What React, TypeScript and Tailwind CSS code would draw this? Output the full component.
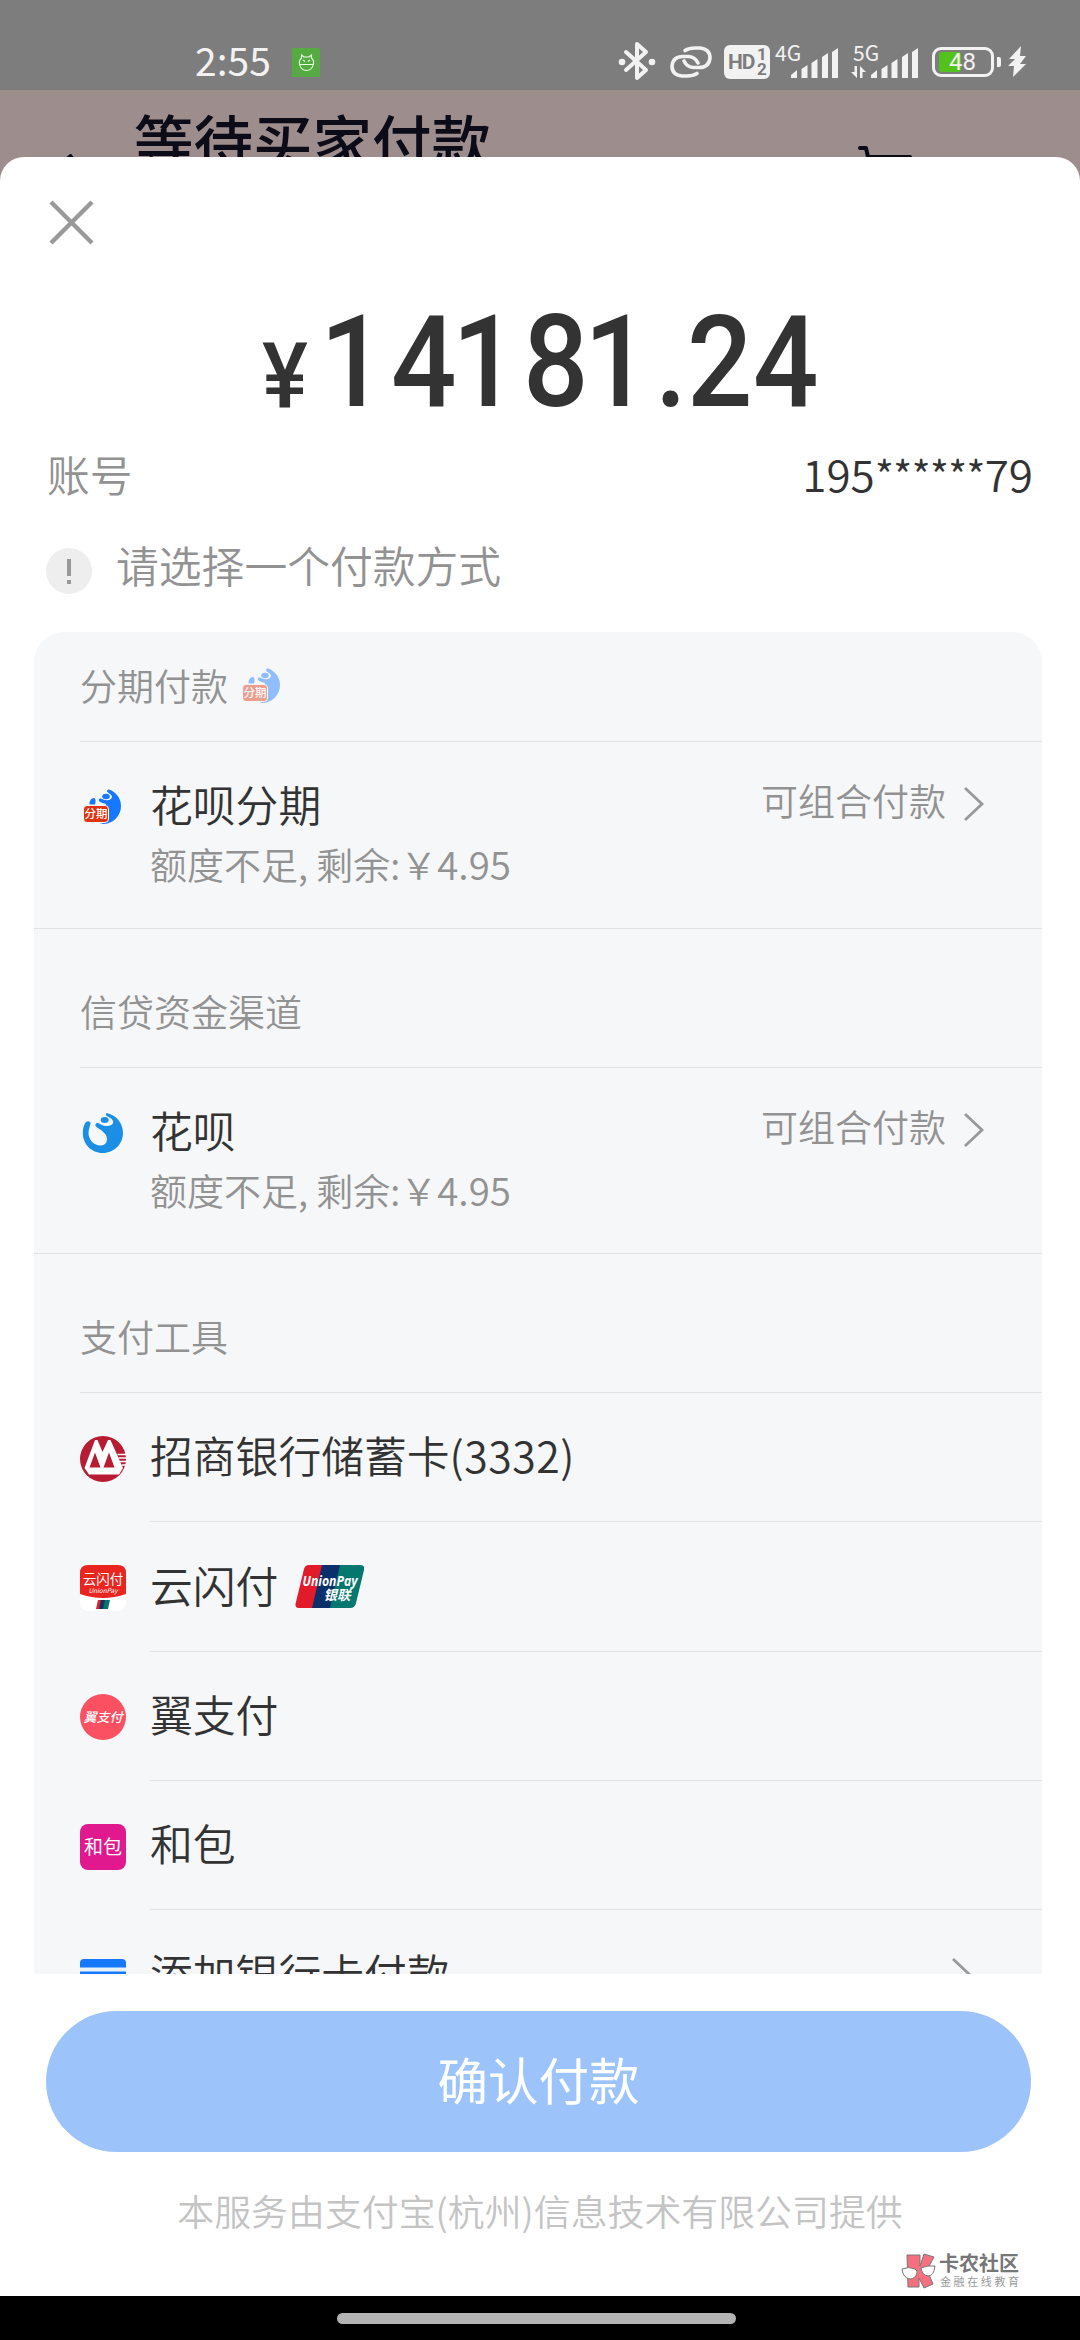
import type { ReactNode } from "react";

interface PayMethod {
  name: string;
  tail?: string;
  icon: ReactNode;
  badge?: ReactNode;
}

const METHODS: PayMethod[] = [
  { name: "招商银行储蓄卡", tail: "(3332)", icon: <CmbIcon /> },
  { name: "云闪付", icon: <QuickPassIcon />, badge: <UnionPayBadge /> },
  { name: "翼支付", icon: <BestPayIcon /> },
  { name: "和包", icon: <HebaoIcon /> },
];

const AMOUNT = "14181.24";

export default function App() {
  return (
    <div className="flex h-[2340px] w-[1080px] flex-col overflow-hidden bg-[#9d8d8d] font-['Noto_Sans_CJK_SC',sans-serif] text-[#333]">
      <StatusBar />

      {/* 被遮住的订单页标题 */}
      <div className="flex h-[67px] shrink-0 items-start overflow-hidden border-t-4 border-[#9a8f8d] text-[#0c0b18]">
        <svg className="mt-[60px] ml-[63px] h-[6px] w-[14px]" viewBox="0 0 14 6">
          <path d="M3 6 L9 1" stroke="currentColor" strokeWidth="4" />
        </svg>
        <h1 className="mt-[13px] ml-[57px] w-[719px] text-[59.5px] leading-[64px] font-medium">
          等待买家付款
        </h1>
        <svg className="mt-[50px] ml-[5px] h-[14px] w-[54px]" viewBox="0 0 54 14">
          <path d="M2 4 H8 L10 13 H52" fill="none" stroke="currentColor" strokeWidth="4" strokeLinecap="round" strokeLinejoin="round" />
        </svg>
      </div>

      <main className="flex h-[2139px] shrink-0 flex-col rounded-t-[24px] bg-white">
        <div className="flex h-[131px] shrink-0 items-center pl-[49px]">
          <svg className="size-[45px]" viewBox="0 0 45 45">
            <path d="M2 2 L43 43 M43 2 L2 43" stroke="#999" strokeWidth="4.5" />
          </svg>
        </div>

        <Amount />

        <div className="flex h-[74px] shrink-0 items-center justify-between pr-[47px] pb-[4px] pl-[47px] text-[42.8px] leading-none">
          <span className="font-[350] text-[#929292]">账号</span>
          <span className="text-[44px] font-[350]">
            195<span className="text-[42px] tracking-[-1px]">******</span>79
          </span>
        </div>

        <div className="flex h-[120px] shrink-0 items-center pb-[6px] pl-[46px]">
          <span className="mt-[4px] flex size-[46px] flex-col items-center justify-center gap-[4px] rounded-full bg-[#eee]">
            <i className="h-[17px] w-[4px] bg-[#999]" />
            <i className="size-[4px] bg-[#999]" />
          </span>
          <span className="mb-[10px] ml-[24px] text-[42.8px] leading-none font-[350] text-[#929292]">
            请选择一个付款方式
          </span>
        </div>

        <section className="mx-[34px] mr-[38px] flex h-[1342px] shrink-0 flex-col overflow-hidden rounded-t-[30px] bg-[#f6f7f9]">
          <GroupTitle className="h-[110px] pb-[2px]">
            分期付款
            <InstallmentIcon className="ml-[13px] size-[42px] opacity-45" />
          </GroupTitle>
          <CreditRow name="花呗分期" icon={<InstallmentIcon className="size-[42px]" />} />

          <GroupTitle className="h-[139px] pt-[27px]">信贷资金渠道</GroupTitle>
          <CreditRow name="花呗" icon={<HuabeiIcon />} />

          <GroupTitle className="h-[139px] pt-[27px]">支付工具</GroupTitle>
          {METHODS.map((method) => (
            <MethodRow key={method.name} {...method} />
          ))}
          <div className="flex h-[129px] shrink-0 items-center pr-[69px] pl-[46px]">
            <CardIcon />
            <span className="mb-[4px] ml-[24px] flex-1 text-[42.8px] leading-none font-[350]">
              添加银行卡付款
            </span>
            <Chevron />
          </div>
        </section>

        <button className="mt-[37px] mr-[49px] ml-[46px] h-[141px] shrink-0 rounded-full bg-[#9dc4fa] pb-[6px] text-[50.5px] leading-none text-white">
          确认付款
        </button>

        <p className="mt-[40px] text-center text-[36.9px] leading-none font-[350] text-[#c4c4c4]">
          本服务由支付宝(杭州)信息技术有限公司提供
        </p>

        <Watermark />
      </main>

      <nav className="flex h-[44px] shrink-0 bg-black pt-[17px] pl-[337px]">
        <div className="h-[11px] w-[399px] rounded-full bg-[#b3b3b3]" />
      </nav>
    </div>
  );
}

function StatusBar() {
  return (
    <header className="flex h-[90px] shrink-0 items-start bg-[#7d7d7d] text-[#f2f2f2]">
      <span className="mt-[39px] ml-[195px] w-[97px] text-[39px] leading-[40px]">2:55</span>
      <svg className="mt-[48px] h-[29px] w-[28px]" viewBox="0 0 28 29">
        <rect width="28" height="29" rx="1" fill="#55ab41" />
        <g fill="none" stroke="#e9ffe0" strokeWidth="1.1">
          <path d="M9.5 10 V7 L12 9 H17 L19.5 7 V10 Q22 12 21.5 16 Q20 22.5 14.5 22.5 Q9 22.5 7.5 16 Q7 12 9.5 10 Z M7.5 16.5 H21.5" />
          <path d="M11 12 L13 13.5 M18 12 L16 13.5" />
        </g>
      </svg>

      <svg className="mt-[40px] ml-[298px] h-[42px] w-[38px]" viewBox="0 0 38 42">
        <path d="M8 12 L28 30 L19 38 V4 L28 12 L8 30" fill="none" stroke="currentColor" strokeWidth="4" strokeLinejoin="round" strokeLinecap="round" />
        <circle cx="4" cy="22" r="3.3" fill="currentColor" />
        <circle cx="34" cy="22" r="3.3" fill="currentColor" />
      </svg>
      <svg className="mt-[45px] ml-[13px] h-[34px] w-[44px]" viewBox="0 0 44 34" fill="none" stroke="currentColor" strokeWidth="3.6" strokeLinecap="round">
        <path d="M16 5.5 Q20 3 26 3 H31 Q41 4 41 13 Q40 22.5 30 22.5 H24 Q18 22 15 16" />
        <path d="M28 28.5 Q24 31 18 31 H13 Q3 30 3 21 Q4 11.5 14 11.5 H20 Q26 12 29 18" />
      </svg>

      {/* HD 1/2 */}
      <div className="mt-[45px] ml-[11px] flex h-[34px] w-[46px] items-center rounded-[6px] bg-[#f2f2f2] pl-[4px] font-['Roboto',sans-serif] font-bold text-[#7d7d7d]">
        <span className="w-[29px] text-[21px] leading-none tracking-tighter">HD</span>
        <span className="flex w-[11px] flex-col text-[17px] leading-[15px]">
          <span>1</span>
          <span>2</span>
        </span>
      </div>

      <div className="mt-[41px] ml-[5px] flex w-[66px]">
        <span className="w-[16px] text-[21px] leading-[22px]">4G</span>
        <SignalBars />
      </div>
      <div className="mt-[41px] ml-[12px] flex w-[68px]">
        <div className="flex w-[18px] flex-col">
          <span className="text-[21px] leading-[22px]">5G</span>
          <svg className="mt-[3px] -ml-[2px] h-[12px] w-[16px]" viewBox="0 0 16 12">
            <path d="M0 6 L6 12 V0 H3.5 V6 Z M9 12 V0 L15 6 H11.5 V12 Z" fill="currentColor" />
          </svg>
        </div>
        <SignalBars />
      </div>

      <div className="mt-[47px] ml-[11px] flex h-[30px] w-[62px] items-center rounded-[9px] border-[3px] border-[#f2f2f2] p-[4px]">
        <div className="flex h-[20px] w-[22px] items-center rounded-[3px] bg-[#53c31b] pl-[10px]">
          <span className="font-['Roboto',sans-serif] text-[24px] leading-none">48</span>
        </div>
      </div>
      <i className="mt-[57px] ml-[3px] h-[10px] w-[4px] rounded-r-[2px] bg-[#f2f2f2]" />
      <svg className="mt-[46px] ml-[7px] h-[32px] w-[19px]" viewBox="0 0 19 32">
        <path d="M13 0 L1 13 H7 L0 20 H6 L5 31 L18 18 H12 L18 10 H12 Z" fill="currentColor" />
      </svg>
    </header>
  );
}

function SignalBars() {
  return (
    <svg className="mt-[7px] h-[30px] w-[48px]" viewBox="0 0 48 30" fill="currentColor">
      <path d="M0 27 L6 22 V30 H0 Z M10.5 21 L16.5 17 V30 H10.5 Z M20.5 15 L26.5 11 V30 H20.5 Z M31 9 L37 5 V30 H31 Z M41 4 L47 0 V30 H41 Z" />
    </svg>
  );
}

// 金额：每位数字等宽，小数点占半格
function Amount() {
  return (
    <div className="flex h-[150px] shrink-0 items-end pb-[12px] pl-[262px] font-['Roboto',sans-serif] leading-none font-medium">
      <span className="mb-[4px] w-[63px] text-[91px] leading-[91px]">
        <span className="inline-block origin-left scale-x-95">¥</span>
      </span>
      {AMOUNT.split("").map((char, i) => (
        <span
          key={i}
          className={
            char === "."
              ? "w-[32px] text-[128px] leading-[128px]"
              : char === "1"
                ? "-ml-[5px] w-[71px] text-[128px] leading-[128px]"
                : "w-[66px] text-[128px] leading-[128px]"
          }
        >
          <span className="inline-block origin-left scale-x-90">{char}</span>
        </span>
      ))}
    </div>
  );
}

function GroupTitle({ className, children }: { className: string; children: ReactNode }) {
  return (
    <div className={`ml-[46px] flex shrink-0 items-center border-b border-[#e1e3e6] text-[37px] leading-none font-[350] text-[#929292] ${className}`}>
      {children}
    </div>
  );
}

// 花呗类渠道：名称 + 剩余额度 + 组合付款入口
function CreditRow({ name, icon }: { name: string; icon: ReactNode }) {
  return (
    <div className="flex h-[186.5px] shrink-0 items-start border-b border-[#dfe3e6] pt-[40px] pr-[57px] pl-[48px]">
      <div className="mt-[4px] mr-[26px]">{icon}</div>
      <div className="flex-1 font-[350]">
        <p className="text-[42.8px] leading-[43px]">{name}</p>
        <p className="mt-[20px] text-[37px] leading-[37px] text-[#929292]">
          额度不足, 剩余:￥<span className="text-[38.5px]">4.95</span>
        </p>
      </div>
      <span className="mr-[17px] text-[37px] leading-[37px] font-[350] text-[#929292]">
        可组合付款
      </span>
      <div className="mt-[4px]">
        <Chevron />
      </div>
    </div>
  );
}

function MethodRow({ name, tail, icon, badge }: PayMethod) {
  return (
    <div className="flex h-[129.3px] shrink-0 pl-[46px]">
      <div className="flex w-[70px] items-center pt-[2px]">{icon}</div>
      <div className="flex flex-1 items-center border-b border-[#e1e3e6]">
        <span className="mb-[5px] text-[42.8px] leading-none font-[350]">
          {name}
          {tail && <span className="tracking-[0.5px]">{tail}</span>}
        </span>
        {badge}
      </div>
    </div>
  );
}

function Chevron() {
  return (
    <svg className="h-[36px] w-[22px]" viewBox="0 0 22 36">
      <path d="M2 2 L19 18 L2 34" fill="none" stroke="#999" strokeWidth="2.8" />
    </svg>
  );
}

function HuabeiIcon() {
  return (
    <svg className="size-[42px]" viewBox="0 0 42 42" fill="#1b8ee6">
      <path d="M25.4 1.3 C34 3 41 11 41 21 C41 32 32 41 20.7 41 C9.5 41 0.8 32 0.8 21 C0.8 16 2 12 4.2 10 C6 8.5 9 9.5 8.5 12 C7.5 15 6.5 18 6.5 21.5 C6.8 28 12 33.5 18.5 33.5 C24 33.5 26 29 24.5 24.5 C23.5 20.5 18 17.5 14.5 15 C12.5 13.5 13.5 10.5 16 11 C19 12 21 14 24 14 C29 14 32 12 31 9 C30 6 25.5 5 24.3 3.5 C23.5 2 24 1.2 25.4 1.3 Z" />
      <ellipse cx="22.7" cy="8" rx="4" ry="3" />
    </svg>
  );
}

function InstallmentIcon({ className }: { className: string }) {
  return (
    <svg className={className} viewBox="0 0 42 42">
      <g fill="#1677ff">
        <path d="M27 3.5 C34 6 39 12 39 20 C39 30 31 38 21 38 L18 37 L24 18 C22 17 19 17 17 15 C16 13 18 12 20 13 C24 15 29 15 30 11 C30 8 25 7 25 5 C25 4 26 3.5 27 3.5 Z" />
        <ellipse cx="24" cy="10.5" rx="3.8" ry="2.8" />
        <path d="M7.5 18.5 Q7.5 12 12 12 Q14.5 13 13 18.5 Z" />
      </g>
      <rect x="1.5" y="19.5" width="25" height="17" rx="3.5" fill="#e0340f" stroke="#f6f7f9" strokeWidth="1" />
      <text x="14" y="32" textAnchor="middle" fontSize="11.5" fontWeight="500" fill="#fff">
        分期
      </text>
    </svg>
  );
}

function CmbIcon() {
  return (
    <svg className="size-[46px]" viewBox="0 0 46 46">
      <circle cx="23" cy="23" r="23" fill="#b71c33" />
      <path d="M15 4 H17.5 L22.5 16 L28 4 H30.5 L43 32 L39 38.5 H9 L4.5 32 Z" fill="#fff" />
      <path d="M15 16.5 L20.5 31.5 H9.5 Z M29 16.5 L34.5 31.5 H23.5 Z" fill="#b71c33" />
      <path d="M37.500 18.5 H46 M38.500 22 H46 M40 25.5 H46 M42 29 H46" stroke="#fff" strokeWidth="1.6" />
    </svg>
  );
}

function QuickPassIcon() {
  return (
    <svg className="size-[46px]" viewBox="0 0 46 46">
      <rect width="46" height="46" rx="8" fill="#fff" />
      <path d="M0 29 V8 Q0 0 8 0 H38 Q46 0 46 8 V29 Q23 37 0 29 Z" fill="#ea2520" />
      <path d="M18 35 H22 L20 44 H16 Z" fill="#d8232e" />
      <path d="M21 35 H26 L24 44 H19 Z" fill="#16305f" />
      <path d="M25 35 H30 L28 44 H23 Z" fill="#08726b" />
      <text x="23" y="19" textAnchor="middle" fontSize="13.5" fill="#fff">
        云闪付
      </text>
      <text x="23" y="27.5" textAnchor="middle" fontSize="6.5" fontStyle="italic" fill="#fff">
        UnionPay
      </text>
    </svg>
  );
}

function UnionPayBadge() {
  return (
    <svg className="ml-[17px] h-[43px] w-[69px]" viewBox="0 0 69 43">
      <path d="M14 0 H30 L20 43 H4 Q0 43 0.5 39 L9 4 Q10 0 14 0 Z" fill="#e21b2b" />
      <path d="M27 0 H46 L36 43 H17 Z" fill="#0a2f6b" />
      <path d="M45 0 H65 Q70 0 69 5 L61 38 Q60 43 55 43 H35 Z" fill="#04776f" />
      <text x="35" y="21" textAnchor="middle" fontSize="14" fontWeight="700" fontStyle="italic" fill="#fff" textLength="55" lengthAdjust="spacingAndGlyphs" fontFamily="Open Sans">
        UnionPay
      </text>
      <text x="42" y="34.5" textAnchor="middle" fontSize="13.5" fontWeight="700" fontStyle="italic" fill="#fff">
        银联
      </text>
    </svg>
  );
}

function BestPayIcon() {
  return (
    <svg className="size-[46px]" viewBox="0 0 46 46">
      <circle cx="23" cy="23" r="23" fill="#fb5062" />
      <text x="23" y="27.5" textAnchor="middle" fontSize="13" fontWeight="500" fontStyle="italic" fill="#fff">
        翼支付
      </text>
    </svg>
  );
}

function HebaoIcon() {
  return (
    <svg className="size-[46px]" viewBox="0 0 46 46">
      <rect width="46" height="46" rx="8" fill="#e0198e" />
      <text x="23" y="30" textAnchor="middle" fontSize="19" fill="#fff">
        和包
      </text>
    </svg>
  );
}

function CardIcon() {
  return (
    <svg className="size-[46px]" viewBox="0 0 46 46">
      <rect y="7" width="46" height="36" rx="4" fill="#1677ff" />
      <rect y="15.5" width="46" height="4" fill="#e8f2fd" />
    </svg>
  );
}

function Watermark() {
  return (
    <div className="mt-[24px] mr-[61px] flex items-start justify-end">
      <svg className="h-[36px] w-[36px]" viewBox="0 0 36 36" stroke="#777" strokeWidth="1">
        <path d="M6 2 H19 V13 L23 1 L33 4 L26 17 L32 31 L23 35 L18 25 V34 H7 Z" fill="#f4707f" />
        <path d="M1 16 Q8 13 14 16 Q17 18 16 20 Q14 26 9 26 Q2 25 1 16 Z M20 15 Q27 12 34 13 Q33 23 27 23 Q21 22 20 15 Z" fill="#fff" />
      </svg>
      <div className="ml-[2px] w-[80px]">
        <p className="text-[20px] leading-[20px] font-bold whitespace-nowrap text-[#777]">卡农社区</p>
        <p className="mt-[2px] ml-[1px] text-[11px] leading-[12px] tracking-[2.6px] whitespace-nowrap text-[#999]">
          金融在线教育
        </p>
      </div>
    </div>
  );
}
